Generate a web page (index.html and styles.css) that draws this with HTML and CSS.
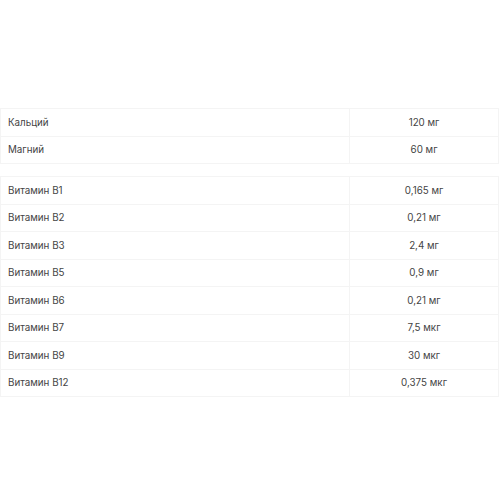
FILE: index.html
```html
<!DOCTYPE html>
<html lang="ru">
<head>
<meta charset="utf-8">
<link rel="stylesheet" href="styles.css">
</head>
<body>
<div class="page">
  <table class="nutr">
    <tr><td class="name">Кальций</td><td class="val">120 мг</td></tr>
    <tr><td class="name">Магний</td><td class="val">60 мг</td></tr>
  </table>
  <table class="nutr">
    <tr><td class="name">Витамин B1</td><td class="val">0,165 мг</td></tr>
    <tr><td class="name">Витамин B2</td><td class="val">0,21 мг</td></tr>
    <tr><td class="name">Витамин B3</td><td class="val">2,4 мг</td></tr>
    <tr><td class="name">Витамин B5</td><td class="val">0,9 мг</td></tr>
    <tr><td class="name">Витамин B6</td><td class="val">0,21 мг</td></tr>
    <tr><td class="name">Витамин B7</td><td class="val">7,5 мкг</td></tr>
    <tr><td class="name">Витамин B9</td><td class="val">30 мкг</td></tr>
    <tr><td class="name">Витамин B12</td><td class="val">0,375 мкг</td></tr>
  </table>
</div>
</body>
</html>
```
FILE: styles.css
```css
html, body {
  margin: 0;
  padding: 0;
  background: #ffffff;
}
.page {
  padding-top: 108px;
  width: 500px;
  font-family: Inter, "Noto Sans", sans-serif;
  font-size: 9.8px;
  color: #444444;
}
.nutr {
  width: 499px;
  border-collapse: collapse;
  margin-bottom: 12px;
}
.nutr td {
  border: 1px solid #f4f4f4;
  height: 26.5px;
  padding: 0 7px;
  vertical-align: middle;
}
.name {
  width: 334px;
  text-align: left;
}
.val {
  text-align: center;
}
```
